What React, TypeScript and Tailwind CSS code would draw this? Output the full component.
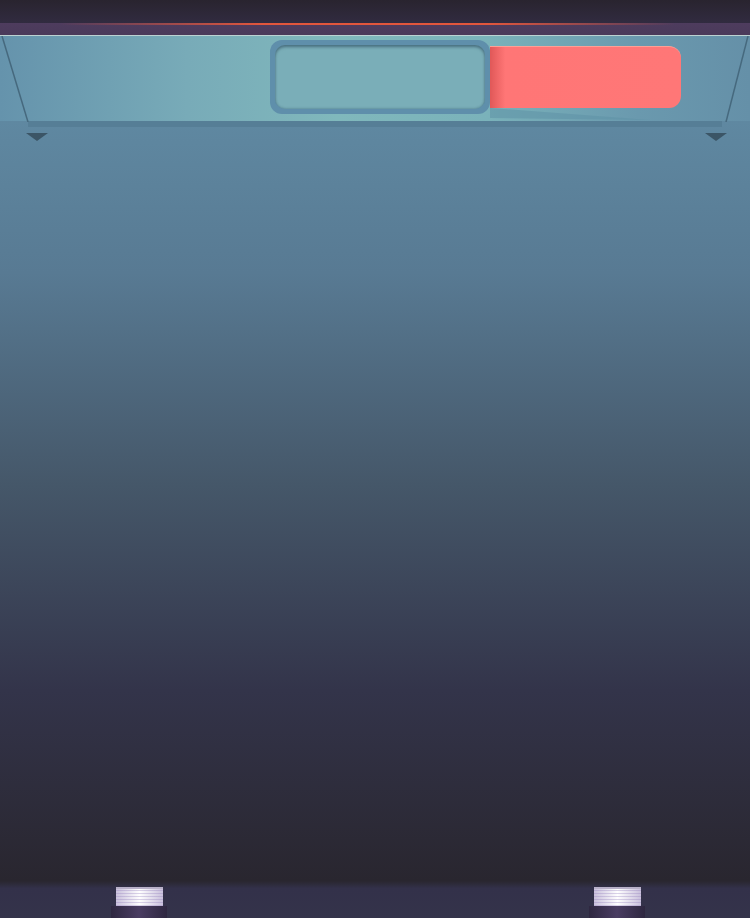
import React from "react";

function Pedestal() {
  return (
    <div className="flex flex-col items-center">
      <div className="w-[47px] h-[19px] bg-[linear-gradient(90deg,#c9c0dc_0%,#ffffff_50%,#c9c0dc_100%)] relative overflow-hidden">
        <div className="absolute inset-0 bg-[repeating-linear-gradient(180deg,rgba(150,130,190,0.35)_0px,rgba(150,130,190,0.35)_1px,transparent_1px,transparent_3px)]" />
        <div className="absolute left-0 right-0 top-0 h-[2px] bg-[#b8b0c8]" />
      </div>
      <div className="w-[56px] h-[12px] bg-[linear-gradient(90deg,#2e2740_0%,#4a3d62_50%,#2e2740_100%)]" />
    </div>
  );
}

export default function App() {
  return (
    <div className="w-[750px] h-[918px] flex flex-col overflow-hidden bg-[#28252f] font-['Liberation_Sans',sans-serif]">
      {/* top dark strip */}
      <div className="h-[23px] bg-[linear-gradient(180deg,#29242f_0%,#312b40_100%)]" />
      {/* purple band */}
      <div className="h-[12px] relative bg-[linear-gradient(180deg,#4e3c5e_0%,#4a3a5a_100%)]">
        <div className="absolute left-0 right-0 top-0 h-[2px] bg-[linear-gradient(90deg,transparent_8%,#e2563c_35%,#e2563c_65%,transparent_90%)]" />
      </div>
      {/* teal panel */}
      <div className="h-[86px] relative flex items-start border-t border-[#bcd2d2] bg-[linear-gradient(90deg,#6593ac_0%,#78abb8_25%,#80b8bc_45%,#7ab2ba_65%,#6a99ae_85%,#6590a8_100%)]">
        <svg className="absolute inset-0" width="750" height="86" viewBox="0 0 750 86">
          <polygon points="490,72 650,84 490,82" fill="#5f92a6" opacity="0.55" />
          <line x1="2" y1="0" x2="28" y2="86" stroke="#46697e" strokeWidth="1.5" />
          <line x1="748" y1="0" x2="726" y2="86" stroke="#46697e" strokeWidth="1.5" />
        </svg>
        <div className="ml-[270px] mt-[4px] w-[220px] h-[74px] rounded-[12px] bg-[#5f8fab] p-[5px] relative">
          <div className="w-full h-full rounded-[10px] bg-[#7aaeb8] shadow-[inset_0_2px_3px_rgba(40,70,90,0.6),inset_0_-1px_2px_rgba(60,100,120,0.3)]" />
        </div>
        <div className="mt-[10px] w-[191px] h-[62px] rounded-r-[12px] bg-[linear-gradient(90deg,#e05858_0%,#ff7676_8%,#ff7777_100%)] border-t border-[#ff9f95] relative" />
      </div>
      {/* main gradient area */}
      <div className="flex-1 flex flex-col bg-[linear-gradient(180deg,#5f88a1_0%,#587a93_20%,#455769_48%,#33344a_75%,#29262f_100%)]">
        <div className="h-[6px] mx-[28px] bg-[#567e96]" />
        <div className="flex justify-between pl-[26px] pr-[23px] mt-[6px]">
          <div className="w-0 h-0 border-l-[11px] border-r-[11px] border-t-[8px] border-l-transparent border-r-transparent border-t-[#3b5566]" />
          <div className="w-0 h-0 border-l-[11px] border-r-[11px] border-t-[8px] border-l-transparent border-r-transparent border-t-[#3b5566]" />
        </div>
        <div className="flex-1" />
      </div>
      {/* bottom strip */}
      <div className="h-[37px] flex items-end bg-[linear-gradient(180deg,#29262f_0%,#33314a_20%,#34334a_100%)]">
        <div className="ml-[111px]"><Pedestal /></div>
        <div className="ml-[422px]"><Pedestal /></div>
      </div>
    </div>
  );
}
